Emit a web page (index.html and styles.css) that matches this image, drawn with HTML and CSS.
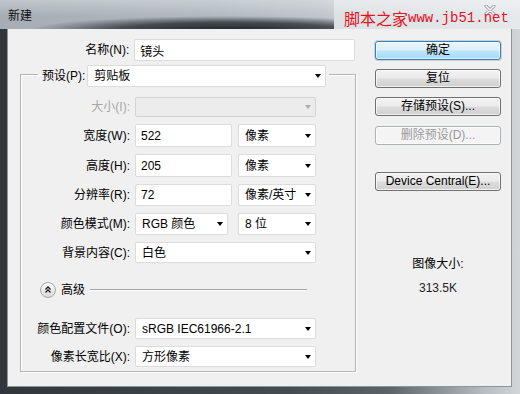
FILE: index.html
```html
<!DOCTYPE html>
<html lang="zh-CN">
<head>
    <meta charset="UTF-8">
    <title>新建</title>
    <link rel="stylesheet" href="styles.css">
</head>
<body>
    <div class="window">
        <div class="titlebar">
            <span class="title">新建</span>
            <span class="close">
                <svg width="12" height="10" viewBox="0 0 12 10">
                    <path d="M2 1 L10 9 M10 1 L2 9" stroke="#8a9096" stroke-width="3" stroke-linecap="round"/>
                    <path d="M2 1 L10 9 M10 1 L2 9" stroke="#f6f7f8" stroke-width="1.6" stroke-linecap="round"/>
                </svg>
            </span>
            <span class="watermark">脚本之家<span class="wm-url">www.jb51.net</span></span>
        </div>

        <div class="client">
            <div class="form-col">
                <div class="name-row">
                    <label class="lbl">名称(N):</label>
                    <input class="field name-input" type="text" value="镜头">
                </div>

                <fieldset class="group">
                    <legend class="preset">
                        <div class="preset-inner">
                            <label>预设(P):</label>
                            <div class="combo preset-combo"><span>剪贴板</span><i class="arrow"></i></div>
                        </div>
                    </legend>

                    <div class="grid">
                        <label class="lbl is-disabled">大小(I):</label>
                        <div class="combo combo-disabled w-full h20"><span></span><i class="arrow"></i></div>

                        <label class="lbl">宽度(W):</label>
                        <div class="pair">
                            <input class="field num h23" type="text" value="522">
                            <div class="combo unit h23"><span>像素</span><i class="arrow"></i></div>
                        </div>

                        <label class="lbl">高度(H):</label>
                        <div class="pair">
                            <input class="field num h23" type="text" value="205">
                            <div class="combo unit h23"><span>像素</span><i class="arrow"></i></div>
                        </div>

                        <label class="lbl">分辨率(R):</label>
                        <div class="pair">
                            <input class="field num" type="text" value="72">
                            <div class="combo unit"><span>像素/英寸</span><i class="arrow"></i></div>
                        </div>

                        <label class="lbl">颜色模式(M):</label>
                        <div class="pair pair-wide">
                            <div class="combo mode"><span>RGB 颜色</span><i class="arrow"></i></div>
                            <div class="combo unit"><span>8 位</span><i class="arrow"></i></div>
                        </div>

                        <label class="lbl">背景内容(C):</label>
                        <div class="combo w-full h21"><span>白色</span><i class="arrow"></i></div>

                        <div class="advanced">
                            <svg class="adv-icon" width="16" height="16" viewBox="0 0 16 16">
                                <defs>
                                    <linearGradient id="advFill" x1="0" y1="0" x2="0" y2="1">
                                        <stop offset="0" stop-color="#ffffff"/>
                                        <stop offset="1" stop-color="#d9d9d9"/>
                                    </linearGradient>
                                </defs>
                                <circle cx="8" cy="8" r="7.5" fill="url(#advFill)" stroke="#a8a8a8"/>
                                <path d="M5.5 7.5 L8 5 L10.5 7.5 M5.5 10.5 L8 8 L10.5 10.5" fill="none" stroke="#1a1a1a" stroke-width="1.3"/>
                            </svg>
                            <span class="adv-text">高级</span>
                            <span class="adv-line"></span>
                        </div>

                        <label class="lbl">颜色配置文件(O):</label>
                        <div class="combo w-full h21"><span>sRGB IEC61966-2.1</span><i class="arrow"></i></div>

                        <label class="lbl">像素长宽比(X):</label>
                        <div class="combo w-full h21"><span>方形像素</span><i class="arrow"></i></div>
                    </div>
                </fieldset>
            </div>

            <div class="side-col">
                <button class="btn btn-default">确定</button>
                <button class="btn">复位</button>
                <button class="btn">存储预设(S)...</button>
                <button class="btn btn-disabled" disabled>删除预设(D)...</button>
                <button class="btn btn-device">Device Central(E)...</button>

                <div class="image-size">
                    <div class="size-label">图像大小:</div>
                    <div class="size-value">313.5K</div>
                </div>
            </div>
        </div>
    </div>
</body>
</html>
```

FILE: styles.css
```css
body {
    margin: 0;
    background: #ffffff;
    font-family: "Liberation Sans", "Noto Sans CJK SC", sans-serif;
    font-size: 12px;
    color: #000;
}

.window {
    width: 520px;
    height: 394px;
    display: flex;
    flex-direction: column;
    box-sizing: border-box;
    background: linear-gradient(to right, #30363c 0%, #454b52 55%, #5c636a 75%, #b6bcc1 93%, #d2d6d9 100%);
}

/* title bar */
.titlebar {
    position: relative;
    flex: none;
    height: 29px;
    box-sizing: border-box;
    padding: 2px 24px 0 8px;
    display: flex;
    align-items: center;
    background:
        linear-gradient(to bottom, rgba(255, 255, 255, 0.3) 0%, rgba(255, 255, 255, 0) 55%),
        linear-gradient(to right, rgba(0, 0, 0, 0) 334px, #dde1e4 334px, #e6e9eb 100%),
        radial-gradient(ellipse 200px 14px at 230px 30px, rgba(24, 29, 35, 0.95) 0%, rgba(24, 29, 35, 0.7) 55%, rgba(24, 29, 35, 0) 100%),
        linear-gradient(to right, #a6adb4 0%, #b1b8bf 40%, #bfc5cb 62%, #d4d8db 70%, #dde0e2 100%);
}

.title {
    line-height: 16px;
    color: #111;
}

.close {
    margin-left: auto;
    display: flex;
    margin-top: -12px;
}

.watermark {
    position: absolute;
    left: 344px;
    top: 7px;
    height: 22px;
    display: flex;
    align-items: center;
    color: #e3121c;
    font-family: "Noto Sans CJK SC", sans-serif;
    font-size: 16px;
    line-height: 20px;
}

.wm-url {
    font-family: "Liberation Mono", monospace;
    font-size: 14px;
}

/* client area */
.client {
    flex: 1;
    margin: 0 9px 8px 8px;
    padding-top: 10px;
    display: flex;
    background: #f0f0f0;
    box-shadow: 0 0 0 1px #8d949a;
    box-sizing: border-box;
}

.form-col {
    flex: none;
    width: 347px;
}

.lbl {
    text-align: right;
    line-height: 16px;
    white-space: nowrap;
}

.lbl.is-disabled {
    color: #a7a7a7;
}

.name-row {
    display: flex;
    align-items: center;
    height: 22px;
}

.name-row .lbl {
    width: 122px;
    margin-right: 5px;
}

.field {
    box-sizing: border-box;
    height: 22px;
    margin: 0;
    padding: 0 5px;
    border: 1px solid #dcdcdc;
    border-radius: 2px;
    background: #fff;
    font: inherit;
    color: #000;
    outline: none;
}

.name-input {
    width: 222px;
}

.num {
    width: 97px;
}

.h20 { height: 20px; }
.h21 { height: 21px; }
.h23 { height: 23px; }

/* combo boxes */
.combo {
    box-sizing: border-box;
    height: 22px;
    padding: 0 4px 0 6px;
    display: flex;
    align-items: center;
    justify-content: space-between;
    border: 1px solid #dcdcdc;
    border-radius: 2px;
    background: #fff;
    line-height: 16px;
    white-space: nowrap;
}

.combo.h20 { height: 20px; }
.combo.h21 { height: 21px; }
.combo.h23 { height: 23px; }

.arrow {
    width: 0;
    height: 0;
    border-top: 4px solid #000;
    border-left: 3.5px solid transparent;
    border-right: 3.5px solid transparent;
}

.combo-disabled {
    background: #ececec;
    border-color: #d2d2d2;
}

.combo-disabled .arrow {
    border-top-color: #a9a9a9;
}

.w-full {
    width: 181px;
}

.unit {
    width: 78px;
}

.mode {
    width: 93px;
}

.pair {
    display: flex;
    align-items: center;
    gap: 6px;
}

.pair-wide {
    gap: 10px;
}

/* group box */
.group {
    margin: 0 0 0 12px;
    padding: 10px 0 4px 0;
    width: 336px;
    min-width: 0;
    box-sizing: border-box;
    border: 1px solid #b4b4b4;
    box-shadow: inset 1px 1px 0 #fff, 1px 1px 0 #fff;
}

.preset {
    margin-left: 17px;
    padding: 4px 3px 0 4px;
}

.preset-inner {
    display: flex;
    align-items: center;
    gap: 2px;
    line-height: 16px;
}

.preset-combo {
    width: 239px;
}

.grid {
    display: grid;
    grid-template-columns: 109px 181px;
    column-gap: 5px;
    row-gap: 7px;
    align-items: center;
}

.grid .lbl {
    justify-self: end;
}

.advanced {
    grid-column: 1 / -1;
    height: 18px;
    margin: 11px 9px 12px 19px;
    display: flex;
    align-items: center;
}

.adv-text {
    margin-left: 5px;
    line-height: 16px;
}

.adv-line {
    flex: 1;
    margin-left: 5px;
    height: 0;
    border-top: 1px solid #a3a3a3;
    border-bottom: 1px solid #fff;
}

/* right column */
.side-col {
    flex: none;
    width: 126px;
    margin-left: 20px;
    padding-top: 2px;
    display: flex;
    flex-direction: column;
}

.btn {
    height: 19px;
    margin: 0 0 9px 0;
    padding: 0;
    border: 1px solid #707070;
    border-radius: 3px;
    background: linear-gradient(to bottom, #f2f2f2 0%, #ebebeb 48%, #dddddd 52%, #cfcfcf 100%);
    box-shadow: inset 0 0 0 1px rgba(255, 255, 255, 0.7);
    font: inherit;
    line-height: 15px;
    color: #000;
}

.btn-default {
    border-color: #3c7fb1;
    background: linear-gradient(to bottom, #eaf6fd 0%, #d9f0fc 48%, #bee6fd 52%, #a7d9f5 100%);
    box-shadow: inset 0 0 0 1px rgba(255, 255, 255, 0.6), 0 0 0 1px rgba(60, 127, 177, 0.25);
}

.btn-disabled {
    margin-top: 1px;
    border-color: #adb2b5;
    background: #f4f4f4;
    color: #9a9a9a;
}

.btn-device {
    margin-top: 18px;
}

.image-size {
    margin-top: 56px;
    text-align: center;
    line-height: 16px;
}

.size-value {
    margin-top: 8px;
    color: #1f1f1f;
}
```
